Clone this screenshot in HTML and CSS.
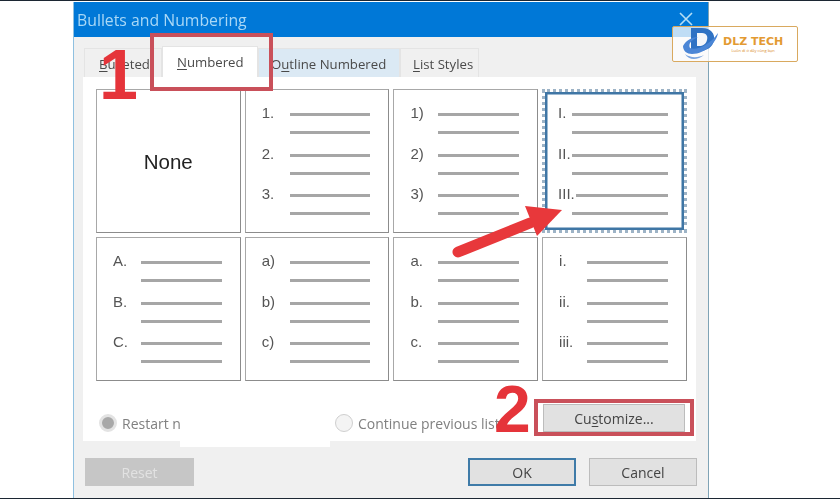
FILE: index.html
```html
<!DOCTYPE html>
<html lang="en">
<head>
    <meta charset="UTF-8">
    <title>Bullets and Numbering</title>
    <link rel="stylesheet" href="styles.css">
</head>
<body>
    <div class="dialog">
        <div class="titlebar">
            <span class="title">Bullets and Numbering</span>
            <svg class="close" width="16" height="16" viewBox="0 0 16 16"><path d="M2 2L14 14M14 2L2 14" stroke="#b5def5" stroke-width="1.6" fill="none"/></svg>
        </div>
        <div class="tabs">
            <div class="tab tab-bulleted"><u>B</u>ulleted</div>
            <div class="tab tab-numbered"><u>N</u>umbered</div>
            <div class="tab tab-outline">O<u>u</u>tline Numbered</div>
            <div class="tab tab-styles"><u>L</u>ist Styles</div>
        </div>
        <div class="panel">
            <div class="gallery">
                <div class="cell none">None</div>
                <div class="cell">
                    <div class="item"><span class="label">1.</span><div class="lines"><i></i><i></i></div></div>
                    <div class="item"><span class="label">2.</span><div class="lines"><i></i><i></i></div></div>
                    <div class="item"><span class="label">3.</span><div class="lines"><i></i><i></i></div></div>
                </div>
                <div class="cell">
                    <div class="item"><span class="label">1)</span><div class="lines"><i></i><i></i></div></div>
                    <div class="item"><span class="label">2)</span><div class="lines"><i></i><i></i></div></div>
                    <div class="item"><span class="label">3)</span><div class="lines"><i></i><i></i></div></div>
                </div>
                <div class="cell selected">
                    <div class="item"><span class="label">I.</span><div class="lines"><i></i><i></i></div></div>
                    <div class="item"><span class="label">II.</span><div class="lines"><i></i><i></i></div></div>
                    <div class="item"><span class="label">III.</span><div class="lines"><i class="short"></i><i></i></div></div>
                </div>
                <div class="cell">
                    <div class="item"><span class="label">A.</span><div class="lines"><i></i><i></i></div></div>
                    <div class="item"><span class="label">B.</span><div class="lines"><i></i><i></i></div></div>
                    <div class="item"><span class="label">C.</span><div class="lines"><i></i><i></i></div></div>
                </div>
                <div class="cell">
                    <div class="item"><span class="label">a)</span><div class="lines"><i></i><i></i></div></div>
                    <div class="item"><span class="label">b)</span><div class="lines"><i></i><i></i></div></div>
                    <div class="item"><span class="label">c)</span><div class="lines"><i></i><i></i></div></div>
                </div>
                <div class="cell">
                    <div class="item"><span class="label">a.</span><div class="lines"><i></i><i></i></div></div>
                    <div class="item"><span class="label">b.</span><div class="lines"><i></i><i></i></div></div>
                    <div class="item"><span class="label">c.</span><div class="lines"><i></i><i></i></div></div>
                </div>
                <div class="cell">
                    <div class="item"><span class="label">i.</span><div class="lines"><i></i><i></i></div></div>
                    <div class="item"><span class="label">ii.</span><div class="lines"><i></i><i></i></div></div>
                    <div class="item"><span class="label">iii.</span><div class="lines"><i></i><i></i></div></div>
                </div>
            </div>
            <div class="options">
                <div class="radio-row restart"><span class="radio checked"></span>Restart n</div>
                <div class="radio-row continue"><span class="radio"></span>Continue previous list</div>
                <button class="btn customize">Cu<u>s</u>tomize...</button>
            </div>
        </div>
        <div class="footer">
            <button class="btn reset">Reset</button>
            <button class="btn ok">OK</button>
            <button class="btn cancel">Cancel</button>
        </div>
    </div>

    <!-- annotations on top of the screenshot -->
    <div class="patch"></div>
    <div class="mark mark-tab"></div>
    <div class="mark mark-customize"></div>
    <span class="step step-1">1</span>
    <span class="step step-2">2</span>
    <svg class="arrow" width="130" height="60" viewBox="0 0 130 60">
        <path d="M12 46L84 17" stroke="#e8383b" stroke-width="11" stroke-linecap="round"/>
        <path d="M79 0L116 4L91 30Z" fill="#e8383b"/>
    </svg>
    <div class="logo">
        <svg class="logo-icon" width="38" height="34" viewBox="0 0 38 34">
            <path d="M9 1H20C29 1 33 7 32 13C31 20 25 24 17 24H9Z" fill="#2f72c4"/>
            <path d="M15 6H20C25 6 26 10 25 13C24 17 21 19 17 19H15Z" fill="#f4f6fa"/>
            <path d="M1 19C4 13 11 10 16 10C9 13 6 17 8 21C14 24 28 18 36 6C35 14 24 27 10 27C5 27 1 24 1 19Z" fill="#4b86d6"/>
            <path d="M3 27C8 31 16 31 22 28C16 33 7 34 3 27Z" fill="#7ba6e0"/>
        </svg>
        <div class="logo-text">
            <span class="logo-name">DLZ TECH</span>
            <span class="logo-sub">Luôn đi ở đây cùng bạn</span>
        </div>
    </div>
</body>
</html>
```

FILE: styles.css
```css
* {
    box-sizing: border-box;
}
html, body {
    margin: 0;
    height: 500px;
    overflow: hidden;
    background-color: #fff;
}
body {
    position: relative;
    padding: 1px 0 2px 73px;
    border-top: 1px solid #1c2733;
    font-family: "Open Sans", "Noto Sans", sans-serif;
    color: #444;
}
body::after {
    content: "";
    position: absolute;
    left: 0;
    right: 0;
    bottom: 1px;
    height: 1px;
    background-color: #1c2733;
}
u {
    text-underline-offset: 2px;
}

/* dialog */
.dialog {
    width: 636px;
    height: 496px;
    display: flex;
    flex-direction: column;
    background-color: #f0f0f0;
    border-left: 1px solid #8fc0e0;
    border-right: 1px solid #7fa3b5;
    filter: blur(0.4px);
}
.titlebar {
    height: 35px;
    flex: none;
    display: flex;
    align-items: center;
    justify-content: space-between;
    padding: 0 14px 0 3px;
    background-color: #0078d7;
}
.title {
    font-size: 15.8px;
    color: #a9d8f6;
}
.close {
    margin-top: -2px;
}
.tabs {
    display: flex;
    height: 40px;
    padding: 11px 0 0 10px;
    flex: none;
}
.tab {
    padding: 6px 0 0 14px;
    font-size: 13.2px;
    white-space: nowrap;
    color: #4a4a4a;
    background-color: #f0f0f0;
    border: 1px solid #e4e4e4;
    border-bottom: none;
}
.tab-bulleted {
    width: 78px;
}
.tab-numbered {
    width: 96px;
    margin-top: -2px;
    background-color: #fff;
}
.tab-outline {
    width: 142px;
    padding-left: 12px;
    background-color: #dbe9f4;
}
.tab-styles {
    width: 79px;
    padding-left: 12px;
}

/* list gallery */
.panel {
    width: 613px;
    height: 364px;
    margin-left: 9px;
    padding: 12px 0 0 13px;
    flex: none;
    background-color: #fff;
}
.gallery {
    display: grid;
    grid-template-columns: repeat(4, 144.5px);
    grid-template-rows: repeat(2, 144px);
    column-gap: 4.2px;
    row-gap: 4px;
}
.cell {
    padding: 17px 18px 0 16px;
    border: 1px solid #8c8c8c;
    border-top-color: #a8a8a8;
    border-left-color: #a8a8a8;
    background-color: #fff;
}
.cell.none {
    display: flex;
    align-items: center;
    justify-content: center;
    padding: 1px 0 0;
    font-family: "Liberation Sans", Arial, sans-serif;
    font-size: 20.5px;
    color: #222;
}
.cell.selected {
    padding: 15px 16px 0 13px;
    border: 3px dotted #9db3c6;
    box-shadow: inset 0 0 0 2.5px #3f76a5;
}
.item {
    display: grid;
    grid-template-columns: 28px 1fr;
    height: 40.5px;
    font-family: "Liberation Sans", Arial, sans-serif;
    font-size: 15px;
    line-height: 12px;
    color: #555;
}
.selected .item {
    grid-template-columns: 14px 1fr;
}
.lines {
    display: flex;
    flex-direction: column;
    gap: 15px;
    padding-top: 6px;
}
.lines i {
    display: block;
    height: 3px;
    background-color: #a6a6a6;
}
.lines i.short {
    margin-left: 4px;
}

/* options row */
.options {
    display: flex;
    align-items: center;
    height: 34px;
    margin-top: 25px;
    padding-left: 3px;
}
.radio-row {
    display: flex;
    align-items: center;
    gap: 5px;
    font-size: 14px;
    color: #808080;
}
.restart {
    width: 236px;
}
.continue {
    width: 208px;
}
.radio {
    width: 18px;
    height: 18px;
    border-radius: 50%;
    border: 1px solid #cfcfcf;
    background-color: #f4f4f4;
}
.radio.checked {
    background-color: #a8a8a8;
    border: 3px solid #e3e3e3;
}
.btn {
    height: 28px;
    padding: 0;
    font-family: "Open Sans", "Noto Sans", sans-serif;
    font-size: 14px;
    color: #444;
    background-color: #e1e1e1;
    border: 1px solid #bcbcbc;
}
.customize {
    width: 142px;
    flex: none;
    margin-top: -10px;
}

/* bottom buttons */
.footer {
    display: flex;
    padding: 17px 0 0 11px;
    flex: none;
}
.reset {
    width: 109px;
    color: #e2e2e2;
    background-color: #c6c6c6;
    border-color: #c6c6c6;
    margin-right: 274px;
}
.ok {
    width: 108px;
    border: 2px solid #3f7ba8;
    margin-right: 13px;
}
.cancel {
    width: 108px;
}

/* annotations */
.patch {
    position: absolute;
    left: 180px;
    top: 404px;
    width: 150px;
    height: 42px;
    background-color: #fff;
}
.mark {
    position: absolute;
    border: 4px solid #c9505a;
}
.mark-tab {
    left: 150px;
    top: 32px;
    width: 123px;
    height: 58px;
}
.mark-customize {
    left: 534px;
    top: 398px;
    width: 160px;
    height: 37px;
}
.step {
    position: absolute;
    font-family: "Liberation Sans", Arial, sans-serif;
    font-weight: 700;
    color: #e5343a;
    line-height: 1;
}
.step-1 {
    left: 99px;
    top: 39px;
    font-size: 70px;
}
.step-2 {
    left: 494px;
    top: 375px;
    font-size: 66px;
}
.arrow {
    position: absolute;
    left: 446px;
    top: 205px;
}
.logo {
    position: absolute;
    left: 672px;
    top: 25px;
    width: 126px;
    height: 36px;
    display: flex;
    align-items: center;
    padding-left: 9px;
    gap: 3px;
    background-color: rgba(255, 255, 255, 0.75);
    border: 1px solid #d9a95f;
    border-radius: 2px;
}
.logo-text {
    display: flex;
    flex-direction: column;
    align-items: center;
}
.logo-name {
    font-family: "DejaVu Sans", sans-serif;
    font-weight: 700;
    font-size: 11px;
    line-height: 13px;
    color: #e39a32;
}
.logo-sub {
    font-size: 4px;
    line-height: 5px;
    color: #d98a2a;
}
```
